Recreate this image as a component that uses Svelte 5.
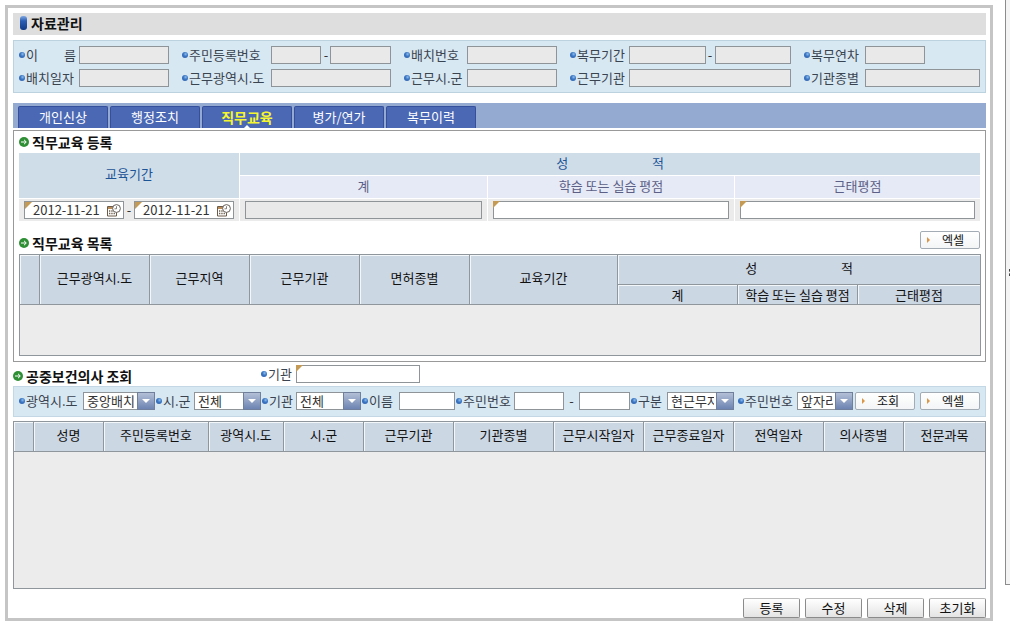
<script lang="ts">
  /**
   * 자료관리 — record header, 직무교육 tab and the 공중보건의사 lookup.
   *
   * Column widths are given in px on <col>; both grids are fixed-layout
   * tables at 100% width, so the columns scale with the window.
   */

  const tabs = ["개인신상", "행정조치", "직무교육", "병가/연가", "복무이력"];
  let activeTab = $state("직무교육");

  let dateFrom = $state("2012-11-21");
  let dateTo = $state("2012-11-21");

  const listCols = [20, 110, 100, 110, 110, 148, 120, 120, 123];
  const listHeads = ["", "근무광역시.도", "근무지역", "근무기관", "면허종별", "교육기간"];

  const doctorCols = [
    { label: "", width: 20 },
    { label: "성명", width: 70 },
    { label: "주민등록번호", width: 105 },
    { label: "광역시.도", width: 75 },
    { label: "시.군", width: 80 },
    { label: "근무기관", width: 90 },
    { label: "기관종별", width: 100 },
    { label: "근무시작일자", width: 90 },
    { label: "근무종료일자", width: 90 },
    { label: "전역일자", width: 90 },
    { label: "의사종별", width: 80 },
    { label: "전문과목", width: 82 },
  ];

  const actions = ["등록", "수정", "삭제", "초기화"];

  // wide gap between the two syllables of the group heading
  const score = "성\u3000\u3000\u3000\u3000\u3000\u3000\u00a0\u00a0적";
</script>

{#snippet arrowIcon()}
  <svg class="arrow-icon" viewBox="0 0 10 10" aria-hidden="true">
    <circle cx="5" cy="5" r="5" fill="#2f8f35" />
    <path d="M2 5h5M5 2.8 7.3 5 5 7.2" fill="none" stroke="#fff" stroke-width="1" />
  </svg>
{/snippet}

{#snippet dateBox(id: string, value: string, label: string)}
  <span class="date required">
    <input {id} type="text" {value} aria-label={label} />
    <button type="button" aria-label="달력">
      <svg viewBox="0 0 14 13" aria-hidden="true">
        <path d="M.5 2.5h9v9.5h-9z" fill="#fff" stroke="#6b5a48" />
        <path d="M1 3h8v2H1z" fill="#b98a55" />
        <path d="M2 7h1.3M4.3 7h1.3M2 9.5h1.3M4.3 9.5h1.3M6.6 9.5h1.3" stroke="#6b5a48" stroke-width="1.3" />
        <circle cx="9.5" cy="4.5" r="3.9" fill="#fff" stroke="#66605a" />
        <path d="M9.5 2.2v2.6h-2" fill="none" stroke="#66605a" stroke-width=".8" />
      </svg>
    </button>
  </span>
{/snippet}

<div class="page">
  <main class="frame">
    <h1 class="title"><i class="pill"></i>자료관리</h1>

    <section class="info">
      <label for="name">이　　름</label>
      <div class="field"><input id="name" type="text" readonly /></div>
      <label for="ssn1">주민등록번호</label>
      <div class="field ssn">
        <input id="ssn1" type="text" readonly /><span>-</span><input type="text" readonly aria-label="주민등록번호 뒷자리" />
      </div>
      <label for="postNo">배치번호</label>
      <div class="field"><input id="postNo" type="text" readonly /></div>
      <label for="term1">복무기간</label>
      <div class="field">
        <input id="term1" type="text" readonly /><span>-</span><input type="text" readonly aria-label="복무기간 종료" />
      </div>
      <label for="year">복무연차</label>
      <div class="field half"><input id="year" type="text" readonly /></div>

      <label for="postDate">배치일자</label>
      <div class="field"><input id="postDate" type="text" readonly /></div>
      <label for="region">근무광역시.도</label>
      <div class="field"><input id="region" type="text" readonly /></div>
      <label for="city">근무시.군</label>
      <div class="field"><input id="city" type="text" readonly /></div>
      <label for="org">근무기관</label>
      <div class="field"><input id="org" type="text" readonly /></div>
      <label for="orgType">기관종별</label>
      <div class="field"><input id="orgType" type="text" readonly /></div>
    </section>

    <div class="tabs" role="tablist">
      {#each tabs as tab (tab)}
        <button
          type="button"
          role="tab"
          class:active={activeTab === tab}
          aria-selected={activeTab === tab}
          onclick={() => (activeTab = tab)}
        >{tab}</button>
      {/each}
    </div>

    <section class="panel">
      <h2>{@render arrowIcon()}직무교육 등록</h2>

      <table class="form">
        <colgroup>
          <col style:width="221px" />
          <col style:width="248px" />
          <col style:width="247px" />
          <col style:width="246px" />
        </colgroup>
        <thead>
          <tr>
            <th rowspan="2">교육기간</th>
            <th colspan="3">{score}</th>
          </tr>
          <tr class="sub">
            <th>계</th>
            <th>학습 또는 실습 평점</th>
            <th>근태평점</th>
          </tr>
        </thead>
        <tbody>
          <tr>
            <td>
              <div class="range">
                {@render dateBox("dateFrom", dateFrom, "교육기간 시작")}
                <span class="dash">-</span>
                {@render dateBox("dateTo", dateTo, "교육기간 종료")}
              </div>
            </td>
            <td><div class="box"><input type="text" readonly aria-label="계" /></div></td>
            <td><div class="box required"><input type="text" aria-label="학습 또는 실습 평점" /></div></td>
            <td><div class="box required"><input type="text" aria-label="근태평점" /></div></td>
          </tr>
        </tbody>
      </table>

      <div class="list-head">
        <h2>{@render arrowIcon()}직무교육 목록</h2>
        <button type="button" class="small">엑셀</button>
      </div>

      <table class="grid list">
        <colgroup>
          {#each listCols as width, i (i)}<col style:width="{width}px" />{/each}
        </colgroup>
        <thead>
          <tr class="top">
            {#each listHeads as head, i (i)}<th rowspan="2">{head}</th>{/each}
            <th colspan="3">{score}</th>
          </tr>
          <tr class="bottom">
            <th>계</th>
            <th>학습 또는 실습 평점</th>
            <th>근태평점</th>
          </tr>
        </thead>
        <tbody>
          <tr><td colspan="9"></td></tr>
        </tbody>
      </table>
    </section>

    <div class="search-head">
      <h2>{@render arrowIcon()}공중보건의사 조회</h2>
      <label for="orgSearch">기관</label>
      <div class="box required"><input id="orgSearch" type="text" /></div>
    </div>

    <form class="filter" onsubmit={(e) => e.preventDefault()}>
      <label for="fRegion">광역시.도</label>
      <div class="select"><select id="fRegion"><option>중앙배치</option></select></div>
      <label for="fCity">시.군</label>
      <div class="select"><select id="fCity"><option>전체</option></select></div>
      <label for="fOrg">기관</label>
      <div class="select"><select id="fOrg"><option>전체</option></select></div>
      <label for="fName">이름</label>
      <input id="fName" type="text" />
      <label for="fSsn">주민번호</label>
      <input id="fSsn" type="text" />
      <span class="dash">-</span>
      <input type="text" aria-label="주민번호 뒷자리" />
      <label for="fKind">구분</label>
      <div class="select"><select id="fKind"><option>현근무자</option></select></div>
      <label for="fPart" class="wide">주민번호</label>
      <div class="select"><select id="fPart"><option>앞자리</option></select></div>
      <div class="filter-buttons">
        <button type="submit" class="small">조회</button>
        <button type="button" class="small">엑셀</button>
      </div>
    </form>

    <table class="grid doctors">
      <colgroup>
        {#each doctorCols as col, i (i)}<col style:width="{col.width}px" />{/each}
      </colgroup>
      <thead>
        <tr>
          {#each doctorCols as col, i (i)}<th>{col.label}</th>{/each}
        </tr>
      </thead>
      <tbody>
        <tr><td colspan="12"></td></tr>
      </tbody>
    </table>

    <div class="actions">
      {#each actions as action (action)}
        <button type="button">{action}</button>
      {/each}
    </div>
  </main>
  <div class="rail"><i></i></div>
</div>

<style>
  :global(body) { background: #fff; }
  .page, .page :is(button, input, select) {
    font-family: "Noto Sans CJK KR", "Liberation Sans", sans-serif;
    font-size: 13px;
    line-height: 18px;
    color: #333;
  }
  .page *, .page *::before, .page *::after { box-sizing: border-box; }
  .page {
    display: flex;
    align-items: flex-start;
    gap: 12px;
    padding-left: 5px;
  }
  .frame {
    flex: 1;
    min-width: 0;
    margin: 5px 0;
    padding: 5px 4px 0 5px;
    border: 3px solid #c5c5c5;
  }
  .rail {
    width: 5px;
    height: 585px;
    display: flex;
    align-items: center;
    justify-content: flex-end;
    background: #f4f4f4;
    border-left: 1px solid #8c8c8c;
    border-bottom: 1px solid #8c8c8c;
  }
  .rail i {
    width: 1px;
    height: 7px;
    margin-bottom: 40px;
    border-left: 1px dashed #444;
  }

  h1, h2 {
    display: flex;
    align-items: center;
    margin: 0;
    font-size: 14px;
    line-height: 22px;
    font-weight: 700;
    color: #111;
    white-space: nowrap;
  }
  .title {
    gap: 4px;
    height: 22px;
    padding: 0 0 2px 7px;
    background: #dedede;
  }
  .pill {
    width: 7px;
    height: 14px;
    border-radius: 3px;
    background: linear-gradient(#7ea6e0, #2c5fb4 35%, #123a86);
  }
  h2 { gap: 3px; }
  .arrow-icon { width: 10px; height: 10px; flex: none; }

  input, select {
    display: block;
    width: 100%;
    min-width: 0;
    height: 18px;
    margin: 0;
    padding: 0 4px;
    border: 1px solid #8f9499;
    border-radius: 0;
    background: #fff;
    outline: 0;
  }
  input[readonly] { background: #e9e9e9; }

  label {
    display: flex;
    align-items: center;
    gap: 1px;
    white-space: nowrap;
    color: #3a4450;
  }
  label::before {
    content: "";
    flex: none;
    width: 6px;
    height: 6px;
    border-radius: 50%;
    background: radial-gradient(circle at 60% 35%, #8fbcec, #3c78c4 40%, #2858a8);
  }

  .info {
    display: grid;
    grid-template-columns: 60px 90fr 102px 120fr 76px 90fr 72px 162fr 74px 115fr;
    row-gap: 5px;
    margin-top: 5px;
    padding: 5px;
    border: 1px solid #bdd2df;
    background: #d8e8f2;
  }
  .info label:not(:nth-child(10n + 1)) { padding-left: 13px; }
  .field { display: flex; min-width: 0; }
  .field span { flex: none; width: 9px; text-align: center; }
  .field.ssn input:first-child { flex: 0 0 42%; }
  .field.half input { width: 52%; }

  .tabs {
    display: flex;
    gap: 2px;
    height: 25px;
    margin-top: 10px;
    padding: 3px 5px 0;
    background: #94aad0;
  }
  .tabs button {
    position: relative;
    width: 90px;
    height: 22px;
    padding: 0 0 2px;
    border: 1px solid #34509c;
    border-bottom: 0;
    border-radius: 2px 2px 0 0;
    background: #4a68b4;
    color: #fff;
    cursor: pointer;
  }
  .tabs button.active {
    font-size: 14px;
    font-weight: 700;
    color: #f6f62e;
  }
  .tabs button.active::after {
    content: "";
    position: absolute;
    left: 50%;
    bottom: 0;
    margin-left: -3px;
    border: 3px solid transparent;
    border-top: 0;
    border-bottom-color: #fff;
  }

  .panel {
    margin-top: 2px;
    padding: 0 5px 5px;
    border: 1px solid #999;
  }

  table {
    width: 100%;
    table-layout: fixed;
    border-collapse: separate;
    border-spacing: 0;
  }
  th { padding: 0 0 3px; font-weight: 400; white-space: nowrap; }
  td { padding: 0; }

  .form th, .form td {
    height: 23px;
    border-right: 1px solid #fff;
    border-bottom: 1px solid #fff;
  }
  .form th { background: #cfdde9; color: #1c5496; }
  .form .sub th { background: #e6eaf6; color: #5c5f86; }
  .form td { padding: 0 5px; background: #ebebeb; }
  .range { display: flex; align-items: center; }
  .range .date { flex: 1; }
  .dash { width: 10px; text-align: center; }
  .date {
    display: flex;
    align-items: center;
    min-width: 0;
    height: 18px;
    padding-right: 2px;
    border: 1px solid #8f9499;
    background: #fff;
  }
  .date input { flex: 1; height: 16px; padding: 0 0 0 8px; border: 0; line-height: 16px; background: none; }
  .date button { display: flex; width: 14px; padding: 0; border: 0; background: none; cursor: pointer; }
  .date svg { width: 14px; height: 13px; }
  .required { position: relative; }
  .required::before {
    content: "";
    position: absolute;
    top: 0;
    left: 0;
    width: 7px;
    height: 7px;
    background: #c49a54;
    clip-path: polygon(0 0, 100% 0, 0 100%);
  }

  .list-head {
    display: flex;
    justify-content: space-between;
    align-items: flex-start;
    height: 32px;
    padding-top: 9px;
  }
  .list-head h2 { line-height: 24px; }
  .small {
    width: 60px;
    height: 18px;
    display: flex;
    align-items: center;
    padding: 0 0 0 6px;
    border: 1px solid #a3acb5;
    border-radius: 2px;
    background: linear-gradient(#fff, #f3f5f6);
    cursor: pointer;
  }
  .page .small { font-size: 12px; line-height: 16px; color: #111; gap: 12px; }
  .small::before {
    content: "";
    border: 3px solid transparent;
    border-left-color: #dc964a;
    border-right: 0;
  }

  .grid {
    border: solid #8f969c;
    border-width: 0 1px 1px 0;
    background: #ececec;
  }
  .grid th {
    height: 30px;
    border: solid #8f969c;
    border-width: 1px 0 0 1px;
    background: #ccd7e4;
    color: #111;
    box-shadow: inset 1px 1px #f4f7fa;
  }
  .grid td { border: solid #8f969c; border-width: 1px 0 0 1px; }
  .list .bottom th { height: 20px; padding: 0; line-height: 17px; }
  .list td { height: 51px; }

  .search-head {
    display: flex;
    align-items: center;
    height: 24px;
  }
  .search-head h2 { width: 248px; padding-top: 4px; }
  .search-head label { width: 35px; }
  .search-head .box { width: 124px; }

  .filter {
    display: grid;
    grid-template-columns:
      64px minmax(0, 72fr) 39px minmax(0, 67fr) 35px minmax(0, 65fr) 38px minmax(0, 56fr)
      59px minmax(0, 50fr) 15px minmax(0, 51fr) 37px minmax(0, 67fr) 63px minmax(0, 56fr) 127px;
    align-items: center;
    height: 31px;
    padding: 0 5px 2px;
    border: 1px solid #c3d8e4;
    background: #d8e8f2;
  }
  .filter label { padding-left: 1px; }
  .filter label:first-child { padding-left: 0; }
  .filter .wide { padding-left: 4px; }
  .filter .dash { width: auto; }
  .filter-buttons { display: flex; justify-content: flex-end; gap: 5px; }
  .select { position: relative; }
  .select select { appearance: none; padding: 0 19px 0 3px; line-height: 16px; }
  .select::after {
    content: "";
    position: absolute;
    top: 0;
    right: 0;
    width: 18px;
    height: 18px;
    border: 1px solid #6f7f9c;
    background: linear-gradient(#b3bfd6, #6d84b2);
    pointer-events: none;
  }
  .select::before {
    content: "";
    position: absolute;
    z-index: 1;
    top: 7px;
    right: 5px;
    border: 4px solid transparent;
    border-top-color: #fff;
    border-bottom: 0;
    pointer-events: none;
  }

  .doctors { margin-top: 4px; }
  .doctors td { height: 137px; }

  .actions {
    display: flex;
    justify-content: flex-end;
    gap: 5px;
    margin-top: 9px;
  }
  .actions button {
    width: 57px;
    height: 20px;
    padding: 0;
    border: 1px solid #8b8b8b;
    border-top-color: #bbb;
    border-radius: 2px;
    background: linear-gradient(#fff, #e4e4e4);
    line-height: 16px;
    color: #111;
    cursor: pointer;
  }
</style>
